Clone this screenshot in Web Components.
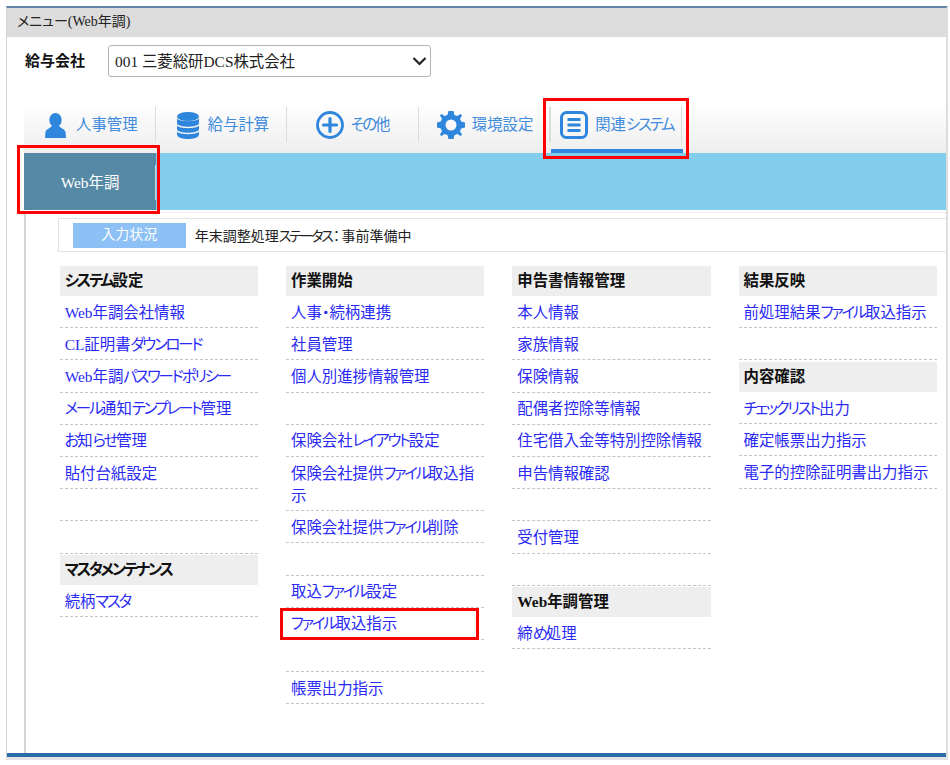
<!DOCTYPE html>
<html lang="ja">
<head>
<meta charset="utf-8">
<title>メニュー(Web年調)</title>
<style>
    html, body { margin: 0; padding: 0; background: #fff; }
    body { font-family: "Liberation Serif", "Noto Sans CJK JP", serif; font-feature-settings: "palt"; }
</style>
</head>
<body>
<app-window heading="メニュー(Web年調)">
    <company-select label="給与会社" value="001 三菱総研DCS株式会社"></company-select>
    <tab-bar>
        <nav-tab icon="person" gap="10" shift="4">人事管理</nav-tab>
        <nav-tab icon="db" gap="9" shift="4">給与計算</nav-tab>
        <nav-tab icon="plus" gap="7" shift="1">その他</nav-tab>
        <nav-tab icon="gear" gap="7" shift="2">環境設定</nav-tab>
        <nav-tab icon="list" gap="7" shift="2" active marked>関連システム</nav-tab>
    </tab-bar>
    <sub-band><band-tab marked>Web年調</band-tab></sub-band>
    <menu-page>
        <status-box slot="status" label="入力状況">年末調整処理ステータス<span style="margin:0 1.5px">：</span>事前準備中</status-box>
        <menu-column>
            <menu-head>システム設定</menu-head>
            <menu-link>Web年調会社情報</menu-link>
            <menu-link>CL証明書ダウンロード</menu-link>
            <menu-link>Web年調パスワードポリシー</menu-link>
            <menu-link>メール通知テンプレート管理</menu-link>
            <menu-link>お知らせ管理</menu-link>
            <menu-link>貼付台紙設定</menu-link>
            <menu-link></menu-link>
            <menu-link></menu-link>
            <menu-head>マスタメンテナンス</menu-head>
            <menu-link>続柄マスタ</menu-link>
        </menu-column>
        <menu-column>
            <menu-head>作業開始</menu-head>
            <menu-link>人事・続柄連携</menu-link>
            <menu-link>社員管理</menu-link>
            <menu-link>個人別進捗情報管理</menu-link>
            <menu-link></menu-link>
            <menu-link>保険会社レイアウト設定</menu-link>
            <menu-link>保険会社提供ファイル取込指<br>示</menu-link>
            <menu-link>保険会社提供ファイル削除</menu-link>
            <menu-link></menu-link>
            <menu-link>取込ファイル設定</menu-link>
            <menu-link marked>ファイル取込指示</menu-link>
            <menu-link></menu-link>
            <menu-link>帳票出力指示</menu-link>
        </menu-column>
        <menu-column>
            <menu-head>申告書情報管理</menu-head>
            <menu-link>本人情報</menu-link>
            <menu-link>家族情報</menu-link>
            <menu-link>保険情報</menu-link>
            <menu-link>配偶者控除等情報</menu-link>
            <menu-link>住宅借入金等特別控除情報</menu-link>
            <menu-link>申告情報確認</menu-link>
            <menu-link></menu-link>
            <menu-link>受付管理</menu-link>
            <menu-link></menu-link>
            <menu-head>Web年調管理</menu-head>
            <menu-link>締め処理</menu-link>
        </menu-column>
        <menu-column>
            <menu-head>結果反映</menu-head>
            <menu-link>前処理結果ファイル取込指示</menu-link>
            <menu-link></menu-link>
            <menu-head>内容確認</menu-head>
            <menu-link>チェックリスト出力</menu-link>
            <menu-link>確定帳票出力指示</menu-link>
            <menu-link>電子的控除証明書出力指示</menu-link>
        </menu-column>
    </menu-page>
</app-window>

<script>
const ICONS = {
    person: `<svg width="21" height="25" viewBox="0 0 21 25"><ellipse cx="10.5" cy="7" rx="6.2" ry="7" fill="#2f86dd"/><path d="M7 12.5 C6.5 15 1.5 15.5 .5 19 L0 25 H21 L20.5 19 C19.5 15.5 14.5 15 14 12.5 Z" fill="#2f86dd"/></svg>`,
    db: `<svg width="22" height="27" viewBox="0 0 22 27" fill="#2f86dd"><ellipse cx="11" cy="4.5" rx="11" ry="4.5"/><path d="M0 6.5 C2 10 20 10 22 6.5 V11 C22 16 0 16 0 11 Z"/><path d="M0 13.5 C2 17 20 17 22 13.5 V17 C22 22 0 22 0 17 Z"/><path d="M0 19.5 C2 23 20 23 22 19.5 V22.5 C22 28.5 0 28.5 0 22.5 Z"/></svg>`,
    plus: `<svg width="28" height="28" viewBox="0 0 28 28"><circle cx="14" cy="14" r="12.5" fill="none" stroke="#2f86dd" stroke-width="2.8"/><path d="M14 7.5 V20.5 M7.5 14 H20.5" stroke="#2f86dd" stroke-width="3.2" stroke-linecap="round"/></svg>`,
    gear: `<svg width="28" height="28" viewBox="0 0 28 28"><path fill-rule="evenodd" fill="#2f86dd" d="M11.4 0 H16.6 L17.4 3.9 L20.2 5.1 L23.6 2.9 L25.1 4.4 L23 7.8 L24.2 10.6 L28 11.4 V16.6 L24.2 17.4 L23 20.2 L25.1 23.6 L23.6 25.1 L20.2 23 L17.4 24.2 L16.6 28 H11.4 L10.6 24.2 L7.8 23 L4.4 25.1 L2.9 23.6 L5 20.2 L3.8 17.4 L0 16.6 V11.4 L3.8 10.6 L5 7.8 L2.9 4.4 L4.4 2.9 L7.8 5 L10.6 3.8 Z M14 8.5 A5.5 5.5 0 1 0 14 19.5 A5.5 5.5 0 1 0 14 8.5 Z"/></svg>`,
    list: `<svg width="28" height="28" viewBox="0 0 28 28"><rect x="1.5" y="1.5" width="25" height="25" rx="5" fill="none" stroke="#2f86dd" stroke-width="3"/><path d="M7.5 8.5 H20.5 M7.5 14 H20.5 M7.5 19.5 H20.5" stroke="#2f86dd" stroke-width="3"/></svg>`
};

const RED_MARK = `position:absolute;border:3px solid #f00;box-sizing:border-box;pointer-events:none;z-index:5;`;

// the original font has narrow kana, so kana runs get pulled together
function tightKana(el)
{
    el.querySelectorAll("*").forEach(c => tightKana(c));
    [...el.childNodes].filter(n => n.nodeType === 3).forEach(n => {
        const box = document.createElement("span");
        box.innerHTML = n.textContent.replace(/[\u3041-\u309f\u30a1-\u30fa\u30fc]+/g,
            m => `<span style="letter-spacing:-2.2px">${m}</span>`);
        n.replaceWith(...box.childNodes);
    });
}

// base class: every element just sets its own shadow markup
class ShadowElement extends HTMLElement
{
    constructor()
    {
        super();
        this.shadow = this.attachShadow({mode: "open"});
    }
    connectedCallback()
    {
        tightKana(this.ownText());
        this.shadow.innerHTML = this.render();
    }
    ownText()
    {
        // containers keep their children as they are
        return document.createElement("span");
    }
}

class TextElement extends ShadowElement
{
    ownText()
    {
        return this;
    }
}

class AppWindow extends ShadowElement
{
    render()
    {
        return `
            <style>
                :host { display: block; width: 942px; height: 754px; margin: 6px 0 0 6px; box-sizing: border-box;
                    border-left: 1px solid #d4d4d4; border-right: 2px solid #dcdcdc; border-top: 2px solid #6585a8;
                    border-bottom: 3px solid #e4e4e4; }
                .frame { display: flex; flex-direction: column; height: 100%; border-bottom: 4px solid #2a6ca5; box-sizing: border-box; overflow: hidden; }
                .title { flex: none; height: 29px; background: #dcdcdc; color: #222; font-size: 14px; line-height: 28px; padding-left: 10px; }
            </style>
            <div class="frame">
                <div class="title">${this.getAttribute("heading")}</div>
                <slot></slot>
            </div>
        `;
    }
}

class CompanySelect extends ShadowElement
{
    render()
    {
        return `
            <style>
                :host { display: flex; flex: none; align-items: center; height: 32px; padding: 8px 0 0 18px; }
                label { width: 83px; font-size: 15px; font-weight: bold; color: #111; margin-top: -3px; }
                .box { position: relative; width: 323px; height: 32px; box-sizing: border-box; border: 1px solid #b5b5b5; border-radius: 3px;
                    background: #fff; font-size: 15.4px; line-height: 31px; padding-left: 6px; color: #222; }
                svg { position: absolute; right: 3px; top: 10px; }
            </style>
            <label>${this.getAttribute("label")}</label>
            <div class="box">${this.getAttribute("value")}
                <svg width="15" height="10" viewBox="0 0 15 10"><path d="M1.5 2 L7.5 8 L13.5 2" fill="none" stroke="#222" stroke-width="2.2"/></svg>
            </div>
        `;
    }
}

class TabBar extends ShadowElement
{
    render()
    {
        return `
            <style>
                :host { display: flex; flex: none; height: 58px; margin: 18px 0 0 17px;
                    background: linear-gradient(#fff 0, #fff 12%, #eeeeee 100%); position: relative; z-index: 2; }
            </style>
            <slot></slot>
        `;
    }
}

class NavTab extends TextElement
{
    render()
    {
        const active = this.hasAttribute("active");
        const marked = this.hasAttribute("marked");
        return `
            <style>
                :host { display: block; position: relative; width: 131.6px; height: 58px; flex: none; }
                .inner { display: flex; align-items: center; justify-content: center; gap: ${this.getAttribute("gap")}px;
                    padding-left: ${this.getAttribute("shift")}px;
                    position: absolute; left: 0; right: 0; top: 12px; height: 35px; border-right: 1px solid #dcdcdc; box-sizing: border-box; }
                .icon { display: flex; margin-top: 1px; }
                .text { color: #3f8bdc; font-size: 15.4px; margin-top: -4px; }
                .line { position: absolute; left: 1px; right: -1px; bottom: 0; height: 4px; background: #2f86dd; }
                .left { position: absolute; left: 0; top: 12px; height: 35px; border-left: 1px solid #dcdcdc; }
                .mark { ${RED_MARK} left: -7px; right: -7px; top: 3px; bottom: -6px; }
            </style>
            <div class="inner">
                <span class="icon">${ICONS[this.getAttribute("icon")]}</span>
                <span class="text"><slot></slot></span>
            </div>
            ${active ? '<div class="left"></div><div class="line"></div>' : ""}
            ${marked ? '<div class="mark"></div>' : ""}
        `;
    }
}

class SubBand extends ShadowElement
{
    render()
    {
        return `
            <style>
                :host { display: flex; flex: none; height: 57px; margin-left: 17px; background: #82cdec; }
            </style>
            <slot></slot>
        `;
    }
}

class BandTab extends ShadowElement
{
    render()
    {
        return `
            <style>
                :host { display: flex; position: relative; width: 132px; align-items: center; justify-content: center; background: #5589a6;
                    color: #fff; font-size: 15.4px; }
                .tick { position: absolute; right: 0; top: 12px; height: 35px; width: 1px; background: #c4dbe6; }
                .mark { ${RED_MARK} left: -7px; right: -4px; top: -8px; bottom: -4px; }
            </style>
            <span style="margin-top:-1px"><slot></slot></span>
            <div class="tick"></div>
            <div class="mark"></div>
        `;
    }
}

class MenuPage extends ShadowElement
{
    render()
    {
        return `
            <style>
                :host { display: block; flex: 1; min-height: 0; margin: 2px 0 0 17px; border-left: 2px solid #d4d4d4; border-top: 1px solid #eee; padding: 5px 0 0 32.3px; }
                .grid { display: grid; grid-template-columns: repeat(4, 198.5px); column-gap: 27.8px; margin: 14px 0 0 1.4px; }
            </style>
            <slot name="status"></slot>
            <div class="grid"><slot></slot></div>
        `;
    }
}

class StatusBox extends TextElement
{
    render()
    {
        return `
            <style>
                :host { display: flex; align-items: center; box-sizing: border-box; height: 34px; margin-right: -2px; padding-left: 13.4px;
                    border: 1px solid #e2e2e2; border-right: 0; font-size: 14px; color: #222; }
                .label { width: 113px; height: 25px; line-height: 24px; text-align: center; background: #8dc1f5; color: #fff; margin-right: 9px; }
            </style>
            <div class="label">${this.getAttribute("label")}</div>
            <span><slot></slot></span>
        `;
    }
}

class MenuColumn extends ShadowElement
{
    render()
    {
        return `
            <style>
                :host { display: block; }
            </style>
            <slot></slot>
        `;
    }
}

class MenuHead extends TextElement
{
    render()
    {
        return `
            <style>
                :host { display: block; height: 30px; line-height: 30.5px; padding-left: 5px; background: #eee; color: #111; font-size: 15.4px; font-weight: bold; }
                :host(:not(:first-child)) { margin-top: 1.6px; }
            </style>
            <slot></slot>
        `;
    }
}

class MenuLink extends TextElement
{
    render()
    {
        return `
            <style>
                :host { display: block; position: relative; box-sizing: border-box; min-height: 32.2px; padding: 5.6px 7px 3.6px 5px;
                    line-height: 22px; font-size: 15.4px; border-bottom: 1px dashed #c4c4c4; }
                a { color: #2a2af5; text-decoration: none; }
                .mark { ${RED_MARK} left: -6px; right: 5.5px; top: .5px; bottom: -1px; }
            </style>
            <a href="#"><slot></slot></a>
            ${this.hasAttribute("marked") ? '<div class="mark"></div>' : ""}
        `;
    }
}

customElements.define("app-window", AppWindow);
customElements.define("company-select", CompanySelect);
customElements.define("tab-bar", TabBar);
customElements.define("nav-tab", NavTab);
customElements.define("sub-band", SubBand);
customElements.define("band-tab", BandTab);
customElements.define("menu-page", MenuPage);
customElements.define("status-box", StatusBox);
customElements.define("menu-column", MenuColumn);
customElements.define("menu-head", MenuHead);
customElements.define("menu-link", MenuLink);
</script>
</body>
</html>
